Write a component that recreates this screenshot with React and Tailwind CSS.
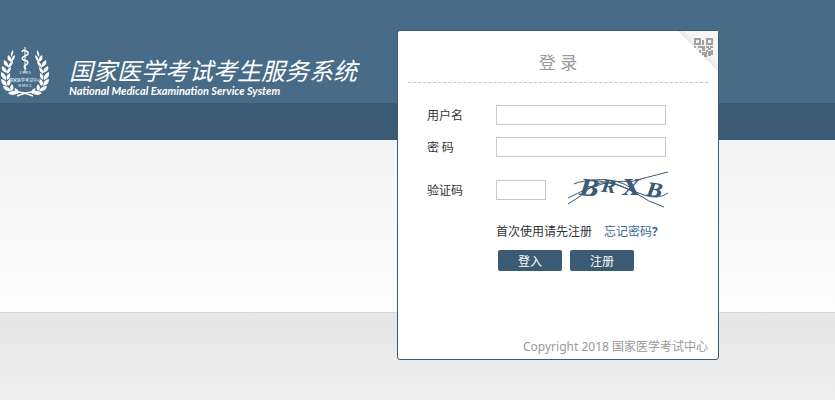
function Emblem() {
  return (
    <svg viewBox="0 0 50 52" className="h-[52px] w-[50px] shrink-0" aria-hidden="true">
      {[0, 1].map((side) => (
        <g key={side} transform={side ? "translate(50 0) scale(-1 1)" : undefined}>
          {[
            "M13 4q1 4-2 7-1-4 2-7Z",
            "M8 9q4 2 3 7-5-2-3-7ZM15 9q0 5-4 7 0-5 4-7Z",
            "M4 14q5 2 4 7-6-2-4-7ZM13 15q0 5-5 7 0-5 5-7Z",
            "M2 20q5 2 5 7-7-2-5-7ZM11 21q0 5-4 7-1-5 4-7Z",
            "M1 26q6 2 5 8-6-2-5-8ZM10 27q1 5-3 7-2-4 3-7Z",
            "M1 33q6 1 6 7-6-1-6-7ZM10 33q2 5-2 7-3-4 2-7Z",
            "M3 40q6 0 8 5-7 1-8-5ZM12 38q3 4 0 7-4-3 0-7Z",
            "M8 47q5-4 10 0-6 4-10 0ZM15 42q5 2 3 6-5-1-3-6Z",
          ].map((d) => (
            <path key={d} d={d} fill="#fff" />
          ))}
          <path d="M17 46q6 0 16 4" fill="none" stroke="#fff" strokeWidth="1.5" />
        </g>
      ))}
      <path d="M25 1v26" stroke="#fff" strokeWidth="1" />
      <path
        d="M22 6q1-3 4-1 4 2 1 4l-4 2q-2 2 1 3l3 1q2 2-1 4-3 1-1 3l1 1"
        fill="none"
        stroke="#fff"
        strokeWidth="1.5"
      />
      <g fill="#fff" fontFamily="'Noto Sans CJK SC', sans-serif" textAnchor="middle">
        <text x="25" y="28" fontSize="4">1 9 8 5</text>
        <text x="25" y="36" fontSize="4">国家医学考试中心</text>
        <text x="25" y="41" fontSize="4">N M E C</text>
      </g>
    </svg>
  );
}

function Captcha() {
  return (
    <svg viewBox="0 0 100 40" className="h-10 w-[100px]" role="img" aria-label="验证码">
      <g fill="none" stroke="#3b5a73" strokeWidth="1">
        <path d="M6 14Q14 10 30 11T66 22Q80 32 96 37" />
        <path d="M0 28Q18 18 34 14T62 12Q76 8 100 2" />
        <path d="M0 34Q14 26 22 18T48 14Q62 20 76 25T100 23" />
        <path d="M24 10Q50 7 66 20" />
      </g>
      <g fill="#3b5a73" fontFamily="'DejaVu Serif', serif" fontStyle="italic" fontWeight="700">
        <text x="12" y="26" fontSize="23" transform="rotate(6 22 18)">B</text>
        <text x="34" y="23" fontSize="17" transform="rotate(8 44 16)">R</text>
        <text x="55" y="25" fontSize="22">X</text>
        <text x="79" y="27" fontSize="19" transform="rotate(8 88 20)">B</text>
      </g>
    </svg>
  );
}

function QrCorner() {
  return (
    <button type="button" aria-label="二维码登录" className="absolute top-0 right-0 cursor-pointer">
      <svg viewBox="0 0 40 40" className="block size-10" aria-hidden="true">
        <defs>
          <linearGradient id="fold" x1="0.42" y1="0.58" x2="0.6" y2="0.4">
            <stop offset="0" stopColor="#dcdcdc" />
            <stop offset="1" stopColor="#f6f6f6" />
          </linearGradient>
          <clipPath id="corner">
            <path d="M0 0H40V40Z" />
          </clipPath>
        </defs>
        <path d="M0 0H40V40Z" fill="url(#fold)" />
        <g clipPath="url(#corner)" fill="#a2a2a2">
          <path d="M16 7h7v7h-7zM18 9v3h3V9zM28 7h7v7h-7zM30 9v3h3V9z" fillRule="evenodd" />
          <path d="M24 9h2v5h-2zM16 15h2v2h-2zM20 15h7v2h-7zM24 17h3v3h-3zM28 15h3v2h-3zM32 15h3v2h-3zM30 17h3v2h-3zM21 19h2v3h-2zM28 19h2v2h-2zM33 19h2v5h-2zM24 21h5v3h-5zM26 24h3v2h-3zM30 20h3v5h-3z" />
        </g>
      </svg>
    </button>
  );
}

const inputClass = "h-5 border border-[#c8c8c8] bg-white px-1 text-xs outline-none";
const labelClass = "w-[69px] shrink-0 font-['Noto_Sans_CJK_SC',sans-serif]";
const buttonClass =
  "h-[21px] w-16 cursor-pointer rounded-xs bg-[#3b5a73] font-['Noto_Sans_CJK_SC',sans-serif] text-xs text-white";

function Field({ id, label, type, name }) {
  return (
    <div className="flex h-5 items-center">
      <label htmlFor={id} className={labelClass}>
        {label}
      </label>
      <input id={id} name={name} type={type} className={`${inputClass} w-[170px]`} />
    </div>
  );
}

function LoginCard() {
  return (
    <form
      onSubmit={(e) => e.preventDefault()}
      className="relative flex min-h-[330px] w-[322px] shrink-0 flex-col rounded-[3px] border border-[#3b5a73] bg-white px-2.5 text-xs text-[#333]"
    >
      <QrCorner />
      <h2 className="border-b border-dashed border-[#c4c4c4] pt-5 pb-[7px] text-center text-[17px] leading-6 text-[#999]">
        登 录
      </h2>

      <div className="flex flex-col gap-3 pt-[22px] pl-[19px]">
        <Field id="username" name="username" type="text" label="用户名" />
        <Field id="password" name="password" type="password" label="密 码" />
        <div className="flex h-[42px] items-center">
          <label htmlFor="captcha" className={labelClass}>
            验证码
          </label>
          <input id="captcha" name="captcha" type="text" className={`${inputClass} w-[50px]`} />
          <span className="ml-[22px]">
            <Captcha />
          </span>
        </div>
        <div className="flex gap-3 pl-[69px] leading-[18px]">
          <span>首次使用请先注册</span>
          <a href="#forgot" className="text-[#3a6a92]">
            忘记密码<b>?</b>
          </a>
        </div>
      </div>

      <div className="flex gap-2 pt-[9px] pl-[90px]">
        <button type="submit" className={buttonClass}>
          登入
        </button>
        <button type="button" className={buttonClass}>
          注册
        </button>
      </div>

      <p className="mt-auto pb-0.5 text-right leading-5 text-[#999]">Copyright 2018 国家医学考试中心</p>
    </form>
  );
}

export default function App() {
  return (
    <div className="grid min-h-screen font-['Noto_Sans','Noto_Sans_CJK_SC',sans-serif]">
      {/* Page bands */}
      <div className="col-start-1 row-start-1 flex flex-col" aria-hidden="true">
        <div className="h-[103px] bg-[#486c88]" />
        <div className="h-[37px] bg-[#3b5a73]" />
        <div className="h-[172px] bg-linear-to-b from-[#f4f4f4] to-[#fdfdfd]" />
        <div className="grow border-t border-[#d8d8d8] bg-linear-to-b from-[#e6e6e6] to-[#efefef]" />
      </div>

      {/* Content */}
      <main className="col-start-1 row-start-1 flex items-start justify-between pt-[30px] pr-[116px] pb-10">
        <header className="flex gap-[19px] pt-4 text-white">
          <Emblem />
          <div className="pt-[13px]">
            <h1 className="font-['Liberation_Sans','Noto_Sans_CJK_SC',sans-serif] text-2xl leading-[26px] whitespace-nowrap italic">
              国家医学考试考生服务系统
            </h1>
            <p className="font-['Lato',sans-serif] text-[11px] leading-3 font-bold whitespace-nowrap italic">
              National Medical Examination Service System
            </p>
          </div>
        </header>
        <LoginCard />
      </main>
    </div>
  );
}
